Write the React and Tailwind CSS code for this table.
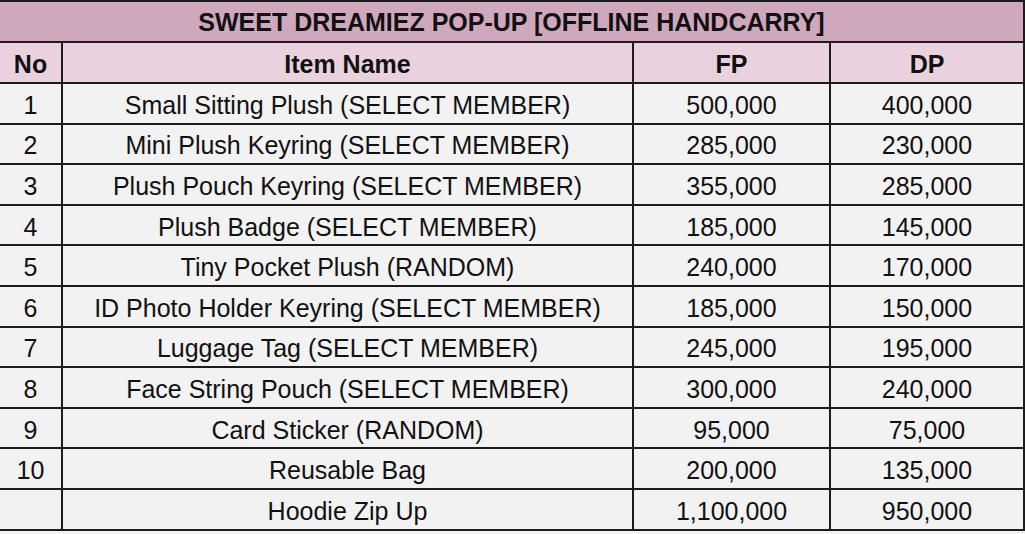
import React from 'react';

const rows = [
  ['1', 'Small Sitting Plush (SELECT MEMBER)', '500,000', '400,000'],
  ['2', 'Mini Plush Keyring (SELECT MEMBER)', '285,000', '230,000'],
  ['3', 'Plush Pouch Keyring (SELECT MEMBER)', '355,000', '285,000'],
  ['4', 'Plush Badge (SELECT MEMBER)', '185,000', '145,000'],
  ['5', 'Tiny Pocket Plush (RANDOM)', '240,000', '170,000'],
  ['6', 'ID Photo Holder Keyring (SELECT MEMBER)', '185,000', '150,000'],
  ['7', 'Luggage Tag (SELECT MEMBER)', '245,000', '195,000'],
  ['8', 'Face String Pouch (SELECT MEMBER)', '300,000', '240,000'],
  ['9', 'Card Sticker (RANDOM)', '95,000', '75,000'],
  ['10', 'Reusable Bag', '200,000', '135,000'],
  ['', 'Hoodie Zip Up', '1,100,000', '950,000'],
];

const cols = 'grid grid-cols-[63px_571px_197px_194px]';

function Cell({ children, bold }) {
  return (
    <div
      className={`flex items-center justify-center pt-[4px] border-b-2 border-r-2 border-[#1c1c1c] ${
        bold ? 'font-bold' : ''
      }`}
    >
      {children}
    </div>
  );
}

export default function App() {
  return (
    <div
      className="w-[1025px] h-[534px] overflow-hidden bg-[#f2f2f2] text-[25px] text-[#111] leading-none"
      style={{ fontFamily: '"Liberation Sans", Arial, sans-serif' }}
    >
      {/* Title */}
      <div className="h-[43px] pt-[2px] border-t-2 border-b-2 border-r-2 border-[#1c1c1c] bg-[#d0a8be] flex items-center justify-center font-bold">
        SWEET DREAMIEZ POP-UP [OFFLINE HANDCARRY]
      </div>

      {/* Column headers */}
      <div className={`${cols} h-[41px] bg-[#e9d2dd]`}>
        <Cell bold>No</Cell>
        <Cell bold>Item Name</Cell>
        <Cell bold>FP</Cell>
        <Cell bold>DP</Cell>
      </div>

      {rows.map((r, i) => (
        <div key={i} className={`${cols} h-[40.6px]`}>
          <Cell>{r[0]}</Cell>
          <Cell>{r[1]}</Cell>
          <Cell>{r[2]}</Cell>
          <Cell>{r[3]}</Cell>
        </div>
      ))}
    </div>
  );
}
